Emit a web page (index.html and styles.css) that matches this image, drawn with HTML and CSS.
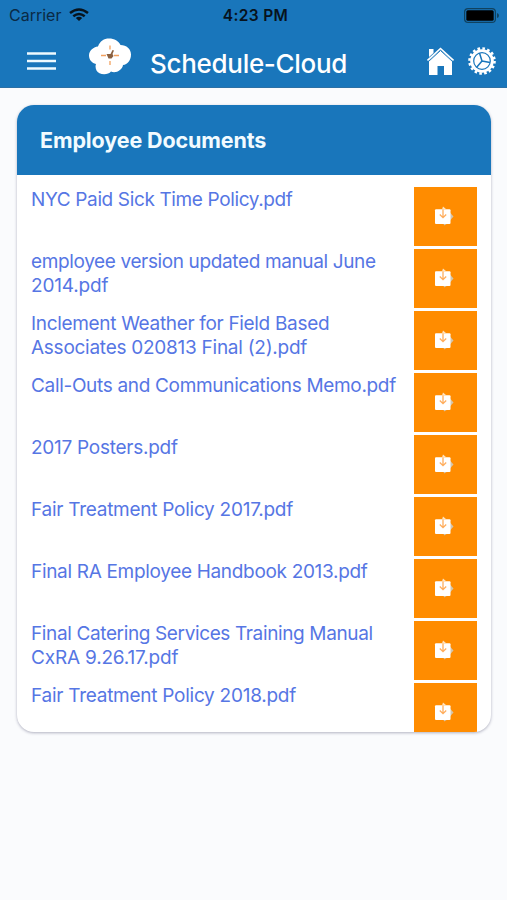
FILE: index.html
```html
<!DOCTYPE html>
<html lang="en">
<head>
<meta charset="utf-8">
<title>Schedule-Cloud</title>
<link rel="stylesheet" href="styles.css">
</head>
<body>
<svg class="defs" aria-hidden="true">
  <symbol id="download" viewBox="0 0 20 20">
    <path d="M16 6.500l3.500 4-3.500 4zM9.500 17h5l-4.500 2.600z" fill="#d3c5ac"/>
    <rect x="1" y="3.300" width="15.500" height="14.700" rx="1" fill="#fff"/>
    <path d="M8 3.500L9 .5l3.500 3z" fill="#ffe4c0"/>
    <path d="M9 3.500v8M5.800 8.500L9 11.700 12.200 8.500" fill="none" stroke="#ffad5c" stroke-width="1.300"/>
  </symbol>
</svg>
<header class="top">
  <div class="status">
    <div class="carrier"><span>Carrier</span>
      <svg width="20" height="14" viewBox="0 0 20 14" fill="none" stroke="#07131d" stroke-width="2.500"><path d="M1 5Q10-2 19 5M4.300 8.300Q10 3.700 15.700 8.300"/><path d="M10 13L6.800 10Q10 7.700 13.200 10Z" fill="#07131d" stroke="none"/></svg>
    </div>
    <div class="time">4:23 PM</div>
    <svg class="battery" width="36" height="15" viewBox="0 0 36 15"><rect x=".6" y=".6" width="30.800" height="13.800" rx="3.500" fill="none" stroke="#10425f" stroke-width="1.200"/><rect x="2.300" y="2.300" width="27.400" height="10.400" rx="1.500" fill="#000"/><path d="M33 5q2 .5 2 2.500t-2 2.500z" fill="#10425f"/></svg>
  </div>
  <nav class="bar">
    <svg class="menu" width="29" height="18" viewBox="0 0 29 18"><path d="M0 1.500h29M0 9h29M0 16.500h29" stroke="#eefaff" stroke-width="2.500"/></svg>
    <svg class="logo" width="42" height="37" viewBox="0 0 42 37">
      <path d="M9 8.500C11 3 15 .5 20 .5c5.500 0 9.500 2.500 11.500 6.500 6 0 10.500 4 10.500 9.500 0 6-3.500 10-8 10.500-.5 5-7.500 9-12 6.500-3 4-12.500 3.500-14.500-1-1-2-1.300-4.500-.5-6.500C3 25 0 22 0 17.500 0 13 4 9 9 8.500z" fill="#fff"/>
      <path d="M21 7.500v4M21 23v4M12 17.500h5M25 17.500h5" stroke="#f2a15f" stroke-width="1.300"/>
      <path d="M17.500 16h4l2-4 1.500.5-1.500 3.500 1 2-2 2.500h-3z" fill="#8a6040"/>
    </svg>
    <h1>Schedule-Cloud</h1>
    <svg class="home" width="27" height="28" viewBox="0 0 27 28"><path d="M2 2h4.500v4L2 10z" fill="#fff"/><path d="M2 13L13.500 3 25 13v15h-8v-9h-6.500v9H2z" fill="#fff"/><path d="M.5 13.500L13.500 1.500l13 12" fill="none" stroke="#fff" stroke-width="1.600"/><path d="M1.500 14.500l12-11 12 11" fill="none" stroke="#1976bb" stroke-width="1"/></svg>
    <svg class="gear" width="28" height="28" viewBox="-14 -14 28 28"><circle r="12.500" fill="none" stroke="#fff" stroke-width="2.600" stroke-dasharray="2.600 2.309"/><circle r="11.800" fill="#fff"/><circle r="8.300" fill="none" stroke="#1976bb" stroke-width="1.200"/><path d="M0 0L-2.500-8M0 0l8 1.500M0 0l-5.500 6.500" stroke="#1976bb" stroke-width="1.500"/></svg>
  </nav>
</header>
<main class="card">
  <h2>Employee Documents</h2>
  <ul>
    <li><a class="tight">NYC Paid Sick Time Policy.pdf</a><button><svg><use href="#download"/></svg></button></li>
    <li><a class="tight">employee version updated manual June<br><span class="wide">2014.pdf</span></a><button><svg><use href="#download"/></svg></button></li>
    <li><a>Inclement Weather for Field Based<br><span class="loose">Associates 020813 Final (2).pdf</span></a><button><svg><use href="#download"/></svg></button></li>
    <li><a>Call-Outs and Communications Memo.pdf</a><button><svg><use href="#download"/></svg></button></li>
    <li><a class="loose">2017 Posters.pdf</a><button><svg><use href="#download"/></svg></button></li>
    <li><a class="loose">Fair Treatment Policy 2017.pdf</a><button><svg><use href="#download"/></svg></button></li>
    <li><a>Final RA Employee Handbook 2013.pdf</a><button><svg><use href="#download"/></svg></button></li>
    <li><a class="tight">Final Catering Services Training Manual<br><span class="wide">CxRA 9.26.17.pdf</span></a><button><svg><use href="#download"/></svg></button></li>
    <li><a class="loose">Fair Treatment Policy 2018.pdf</a><button><svg><use href="#download"/></svg></button></li>
  </ul>
</main>
</body>
</html>
```
FILE: styles.css
```css
* { box-sizing: border-box; }
body { margin: 0; height: 900px; overflow: hidden; background: #fafbfd; font-family: Inter, "Liberation Sans", sans-serif; }
svg { display: block; flex: none; }
.defs { display: none; }
.top { height: 88px; background: #1976bb; border-bottom: 1px solid #2c70a5; color: #fff; }
.status { height: 30px; padding: 0 7px 0 9px; display: grid; grid-template-columns: 1fr auto 1fr; align-items: center; color: #07131d; font-size: 16px; }
.carrier { display: flex; align-items: center; gap: 8px; color: #0a2a45; }
.time { font-weight: 600; font-size: 15.5px; letter-spacing: .35px; margin-left: 2px; }
.battery { justify-self: end; }
.bar { height: 57px; display: flex; align-items: flex-start; padding: 0 11px 0 27px; }
.menu { margin-top: 22px; }
.logo { margin: 8px 0 0 33px; }
h1 { margin: 18px auto 0 19px; font-size: 26px; line-height: 32px; font-weight: 500; letter-spacing: -.3px; white-space: nowrap; }
.home { margin-top: 17px; }
.gear { margin: 17px 0 0 14px; }
.card { width: 474px; height: 627px; margin: 17px 0 0 17px; border-radius: 17px; background: #fff; overflow: hidden; box-shadow: 0 1px 3px rgba(40, 40, 80, .35); }
h2 { height: 70px; margin: 0; padding-left: 23px; background: #1976bb; color: #f2fbff; font-size: 21.5px; line-height: 70px; letter-spacing: -.12px; font-weight: 650; }
ul { list-style: none; margin: 0; padding: 12px 14px 0; }
li { height: 62px; display: flex; justify-content: space-between; align-items: flex-start; }
a { margin-top: 1px; color: #5676e4; font-size: 19px; line-height: 24px; letter-spacing: -.32px; white-space: nowrap; }
.tight { letter-spacing: -.37px; }
.loose { letter-spacing: -.26px; }
.wide { letter-spacing: -.18px; }
button { width: 63px; height: 59px; flex: none; padding: 0; border: 0; background: #ff8c00; display: flex; align-items: center; justify-content: center; }
button svg { width: 20px; height: 20px; margin: -1px 0 0 -3px; }
```
